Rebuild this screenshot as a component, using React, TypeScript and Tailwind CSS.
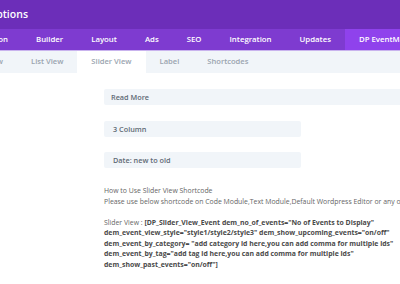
const font = { fontFamily: '"Open Sans", "Liberation Sans", sans-serif' };

const navItems = ["Builder", "Layout", "Ads", "SEO", "Integration", "Updates"];
const subTabs = ["List View", "Slider View", "Label", "Shortcodes"];

export default function App() {
  return (
    <div className="h-[284px] w-[400px] overflow-hidden bg-white" style={font}>
      {/* title bar */}
      <div className="flex h-[29px] items-center bg-[#6c2eb9]">
        <div className="flex w-[28px] shrink-0 justify-end">
          <span className="shrink-0 whitespace-nowrap text-[10.5px] font-semibold text-white">
            Theme Options
          </span>
        </div>
      </div>

      {/* main tabs */}
      <div className="flex h-[22px] items-stretch border-b border-[#c9b3ee] bg-[#7e3bd0] text-[7.8px] font-semibold text-white">
        <div className="flex w-[22px] shrink-0 items-center justify-end pr-[14px]">
          <span className="shrink-0 whitespace-nowrap">Navigation</span>
        </div>
        {navItems.map((n) => (
          <div key={n} className="flex shrink-0 items-center whitespace-nowrap px-[14px]">
            {n}
          </div>
        ))}
        <div className="flex flex-1 items-center whitespace-nowrap bg-[#8f42ec] px-[14px]">
          DP EventMaster
        </div>
      </div>

      {/* sub tabs */}
      <div className="flex h-[22px] items-stretch bg-[#f1f5f9] text-[7.6px] font-semibold text-[#9aa4af]">
        <div className="flex w-[17px] shrink-0 items-center justify-end pr-[14px]">
          <span className="shrink-0 whitespace-nowrap">Grid View</span>
        </div>
        {subTabs.map((t) => (
          <div
            key={t}
            className={
              "flex shrink-0 items-center whitespace-nowrap px-[14px] " +
              (t === "Slider View" ? "bg-white" : "")
            }
          >
            {t}
          </div>
        ))}
      </div>

      {/* content */}
      <div className="pl-[104px] pt-[16px]">
        <div className="flex h-[16px] w-[320px] items-center rounded-[2px] bg-[#f1f5f9] pl-[7px] text-[7.3px] font-semibold text-[#5f6a75]">
          Read More
        </div>
        <div className="mt-[16px] flex h-[16px] w-[197px] items-center rounded-[2px] bg-[#f1f5f9] pl-[9px] text-[7.3px] font-semibold text-[#5f6a75]">
          3 Column
        </div>
        <div className="mt-[15px] flex h-[16px] w-[197px] items-center rounded-[2px] bg-[#f1f5f9] pl-[9px] text-[7.3px] font-semibold text-[#5f6a75]">
          Date: new to old
        </div>

        <div className="mt-[18px] whitespace-nowrap text-[6.9px] leading-[10.5px] text-[#666]">
          <div>How to Use Slider View Shortcode</div>
          <div>
            Please use below shortcode on Code Module,Text Module,Default Wordpress Editor or any
            other place
          </div>
          <div className="h-[10.5px]" />
          <div>
            Slider View :{" "}
            <span className="font-bold text-[#4a4a4a]">
              [DP_Slider_View_Event dem_no_of_events="No of Events to Display"
            </span>
          </div>
          <div className="font-bold text-[#4a4a4a]">
            dem_event_view_style="style1/style2/style3" dem_show_upcoming_events="on/off"
          </div>
          <div className="font-bold text-[#4a4a4a]">
            dem_event_by_category= "add category id here,you can add comma for multiple ids"
          </div>
          <div className="font-bold text-[#4a4a4a]">
            dem_event_by_tag="add tag id here,you can add comma for multiple ids"
          </div>
          <div className="font-bold text-[#4a4a4a]">dem_show_past_events="on/off"]</div>
        </div>
      </div>
    </div>
  );
}
